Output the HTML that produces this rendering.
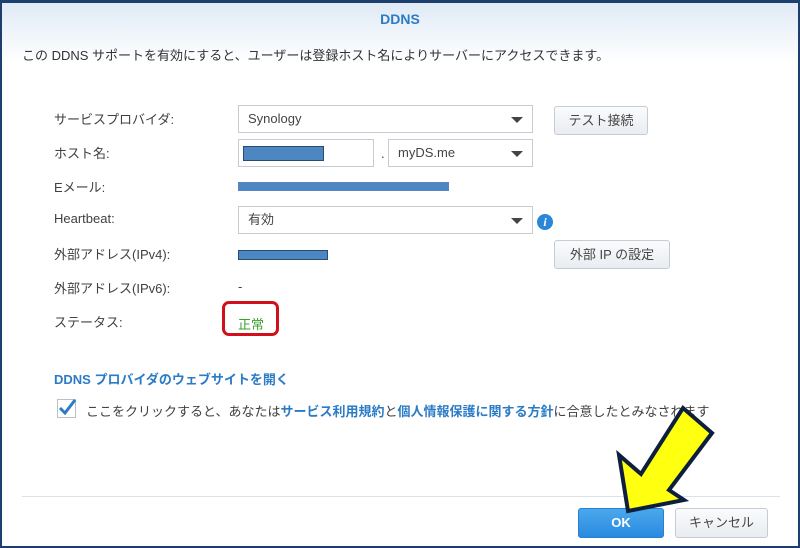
<!DOCTYPE html>
<html><head><meta charset="utf-8"><style>
body{margin:0;width:800px;height:547px;overflow:hidden;background:#fff;font-family:"Liberation Sans","Noto Sans CJK JP",sans-serif;position:relative;font-size:13px;color:#404040}
.frame{position:absolute;left:0;top:0;width:796px;height:543px;border:2px solid #1c3f6e;border-top-width:3px}
.hdr{position:absolute;left:2px;top:3px;width:796px;height:60px;background:linear-gradient(#dfeaf5,#fff)}
.a{position:absolute;white-space:nowrap}
.sel{position:absolute;border:1px solid #c8ccd2;background:#fff;height:28px;box-sizing:border-box;line-height:26px;padding-left:9px;font-size:13px;color:#444}
.sel .t{position:absolute;right:9px;top:11px;width:0;height:0;border-left:6px solid transparent;border-right:6px solid transparent;border-top:6px solid #444}
.btn{position:absolute;border:1px solid #c5ccd4;border-radius:3px;background:linear-gradient(#fafbfc,#e9edf1);box-sizing:border-box;text-align:center;font-size:13px;color:#444}
.red{background:#4d87c2;position:absolute;border:1px solid #2b4c72}
.lb{left:54px}
</style></head><body>
<div class="hdr"></div>
<div class="frame"></div>
<div class="a" style="left:0;width:800px;text-align:center;top:11px;font-weight:bold;color:#2b7bc6;font-size:14px">DDNS</div>
<div class="a" style="left:22px;top:45px;font-size:13px;color:#333">この DDNS サポートを有効にすると、ユーザーは登録ホスト名によりサーバーにアクセスできます。</div>
<div class="a lb" style="top:109px">サービスプロバイダ:</div>
<div class="a lb" style="top:143px">ホスト名:</div>
<div class="a lb" style="top:177px">Eメール:</div>
<div class="a lb" style="top:211px">Heartbeat:</div>
<div class="a lb" style="top:244px">外部アドレス(IPv4):</div>
<div class="a lb" style="top:278px">外部アドレス(IPv6):</div>
<div class="a lb" style="top:312px">ステータス:</div>
<div class="sel" style="left:238px;top:105px;width:295px">Synology<span class="t"></span></div>
<div class="btn" style="left:554px;top:106px;width:94px;height:29px;line-height:27px">テスト接続</div>
<div class="sel" style="left:238px;top:139px;width:136px"></div>
<div class="red" style="left:243px;top:146px;width:79px;height:13px"></div>
<div class="a" style="left:381px;top:146px">.</div>
<div class="sel" style="left:388px;top:139px;width:145px">myDS.me<span class="t"></span></div>
<div class="red" style="left:238px;top:182px;width:209px;height:7px;border-color:#5a86c0"></div>
<div class="sel" style="left:238px;top:206px;width:295px">有効<span class="t"></span></div>
<div style="position:absolute;left:537px;top:214px;width:16px;height:16px;border-radius:50%;background:#2a86d8;color:#fff;font:bold italic 12px 'Liberation Serif',serif;text-align:center;line-height:16px">i</div>
<div class="red" style="left:238px;top:250px;width:88px;height:8px"></div>
<div class="btn" style="left:554px;top:240px;width:116px;height:29px;line-height:27px">外部 IP の設定</div>
<div class="a" style="left:238px;top:279px">-</div>
<div style="position:absolute;left:222px;top:301px;width:57px;height:35px;border:3px solid #d0101a;border-radius:7px;box-sizing:border-box"></div>
<div class="a" style="left:238px;top:314px;color:#3aa02c">正常</div>
<div class="a" style="left:54px;top:369px;color:#2b7bc6;font-weight:bold">DDNS プロバイダのウェブサイトを開く</div>
<div style="position:absolute;left:57px;top:399px;width:19px;height:19px;border:1px solid #b8c0c8;box-sizing:border-box;background:#fff"></div>
<svg style="position:absolute;left:57px;top:397px" width="22" height="22"><path d="M3 11 L8 16 L18 3" stroke="#2b7bc6" stroke-width="3" fill="none"/></svg>
<div class="a" style="left:86px;top:401px">ここをクリックすると、あなたは<b style="color:#2b7bc6">サービス利用規約</b>と<b style="color:#2b7bc6">個人情報保護に関する方針</b>に合意したとみなされます</div>
<div style="position:absolute;left:22px;top:496px;width:758px;height:1px;background:#dde2e8"></div>
<div class="btn" style="left:578px;top:508px;width:86px;height:30px;line-height:28px;background:linear-gradient(#4aa8ec,#2a8ae0);border-color:#2a7fd0;color:#fff;font-weight:bold">OK</div>
<div class="btn" style="left:675px;top:508px;width:93px;height:30px;line-height:28px">キャンセル</div>
<svg style="position:absolute;left:0;top:0" width="800" height="547"><polygon points="628,511 619,455 641,474 683,408 712,433 669,490 684,500" fill="#ffff10" stroke="#0d1f3c" stroke-width="4" stroke-linejoin="miter"/></svg>
</body></html>
